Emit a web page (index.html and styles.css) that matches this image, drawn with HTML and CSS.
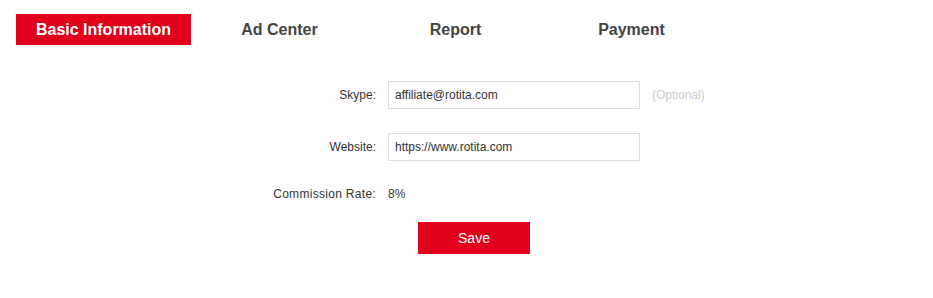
FILE: index.html
```html
<!DOCTYPE html>
<html>
  <head>
    <meta charset="utf-8">
    <title>Affiliate - Basic Information</title>
    <link rel="stylesheet" href="styles.css">
  </head>
  <body>
    <ul class="tabs">
      <li class="active">Basic Information</li>
      <li>Ad Center</li>
      <li>Report</li>
      <li>Payment</li>
    </ul>
    <form class="info" action="#" method="post">
      <div class="row">
        <label>Skype:</label>
        <input type="text" name="info[skype]" value="affiliate@rotita.com">
        <span class="hint">(Optional)</span>
      </div>
      <div class="row">
        <label>Website:</label>
        <input type="text" name="info[website]" value="https://www.rotita.com">
      </div>
      <div class="row plain">
        <label class="wide">Commission Rate:</label>
        <span class="value">8%</span>
      </div>
      <div class="actions">
        <input type="submit" value="Save">
      </div>
    </form>
  </body>
</html>
```

FILE: styles.css
```css
html, button, input {
  font-family: "Liberation Sans", Arial, sans-serif;
}
body {
  margin: 0;
  background: #fff;
  color: #333;
  font-family: "Liberation Sans", Arial, sans-serif;
}

/* tabs */
.tabs {
  display: flex;
  gap: 1px;
  margin: 14px 0 0 16px;
  padding: 0;
  list-style: none;
}
.tabs li {
  width: 175px;
  height: 31px;
  line-height: 31px;
  text-align: center;
  font-size: 16px;
  font-weight: bold;
  color: #444;
}
.tabs li.active {
  background: #e0001b;
  color: #fff;
}

/* form */
.info {
  margin: 36px 0 0;
  font-size: 12px;
}
.info .row {
  display: flex;
  align-items: center;
  height: 28px;
  margin-bottom: 24px;
}
.info .row.plain {
  height: 16px;
  padding-top: 1px;
  margin-bottom: 20px;
}
.info label {
  width: 376px;
  margin-right: 12px;
  text-align: right;
  color: #333;
}
.info label.wide {
  letter-spacing: 0.3px;
}
.info input[type="text"] {
  box-sizing: border-box;
  width: 252px;
  height: 28px;
  margin: 0;
  padding: 0 6px;
  font-size: 12px;
  color: #333;
  border: 1px solid #ddd;
  outline: none;
}
.info .hint {
  margin-left: 12px;
  color: #ccc;
}
.info .value {
  color: #333;
}
.actions {
  padding-left: 418px;
}
.actions input[type="submit"] {
  width: 112px;
  height: 32px;
  margin: 0;
  font-size: 14px;
  color: #fff;
  background: #e0001b;
  border: none;
  cursor: pointer;
}
```
